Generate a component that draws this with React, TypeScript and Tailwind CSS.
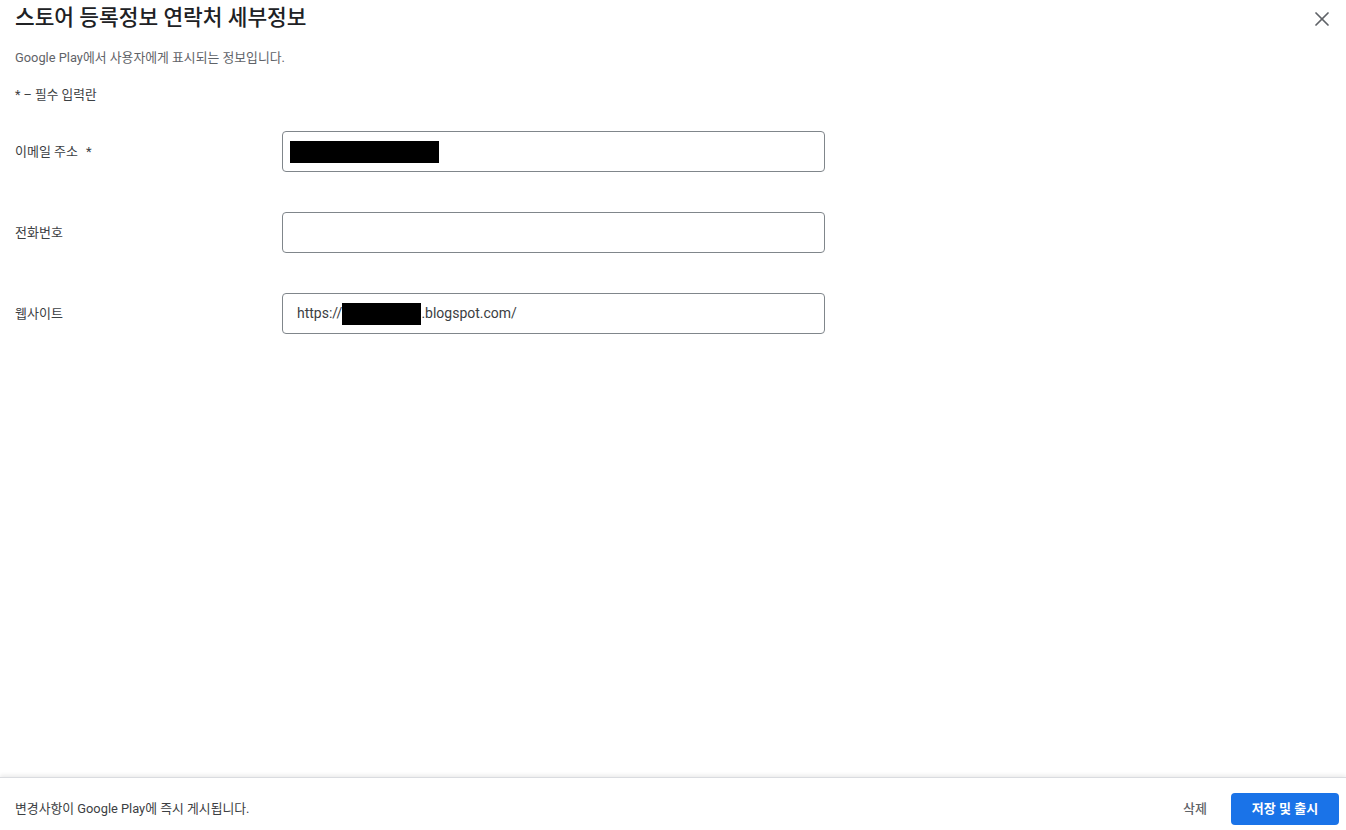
import { X } from "lucide-react";

const FONT = { fontFamily: 'Roboto, "Noto Sans CJK KR", sans-serif' };

type FieldProps = {
  label: string;
  required?: boolean;
  children?: React.ReactNode;
};

function Field({ label, required = false, children }: FieldProps) {
  return (
    <div className="flex items-center h-[41px]">
      <div className="w-[267px] text-[13px] text-[#3c4043]">
        {label}
        {required && <span className="ml-2">*</span>}
      </div>
      <div className="w-[543px] h-[41px] border border-[#80868b] rounded-[4px] flex items-center pl-[7px] text-[14px] text-[#3c4043]">
        {children}
      </div>
    </div>
  );
}

export default function App() {
  return (
    <div className="h-screen flex flex-col bg-white" style={FONT}>
      <div className="flex-1 px-[15px]">
        <div className="flex items-center justify-between h-[36px]">
          <h1 className="text-[21.4px] font-medium text-[#202124]">스토어 등록정보 연락처 세부정보</h1>
          <X className="w-6 h-6 text-[#5f6368] mr-[-3px] mt-[2px]" strokeWidth={1.75} />
        </div>
        <p className="mt-[12px] text-[12.85px] text-[#5f6368]">Google Play에서 사용자에게 표시되는 정보입니다.</p>
        <p className="mt-[18px] text-[12.7px] text-[#3c4043]">* – 필수 입력란</p>
        <div className="mt-[27px] flex flex-col gap-[40px]">
          <Field label="이메일 주소" required>
            <div className="w-[149px] h-[22px] bg-black" />
          </Field>
          <Field label="전화번호" />
          <Field label="웹사이트">
            <span className="ml-[7px]">https://</span>
            <div className="w-[79px] h-[22px] bg-black" />
            <span>.blogspot.com/</span>
          </Field>
        </div>
      </div>
      <div className="h-[53px] border-t border-[#dadce0] shadow-[0_-2px_4px_rgba(0,0,0,0.08)] flex items-center justify-between pt-[10px] pl-[15px] pr-[7px]">
        <span className="text-[12.85px] text-[#3c4043]">변경사항이 Google Play에 즉시 게시됩니다.</span>
        <div className="flex items-center gap-[24px]">
          <button className="text-[13px] font-medium text-[#5f6368]">삭제</button>
          <button className="w-[108px] h-[32px] rounded-[4px] bg-[#1a73e8] text-white text-[13px] font-bold">저장 및 출시</button>
        </div>
      </div>
    </div>
  );
}
